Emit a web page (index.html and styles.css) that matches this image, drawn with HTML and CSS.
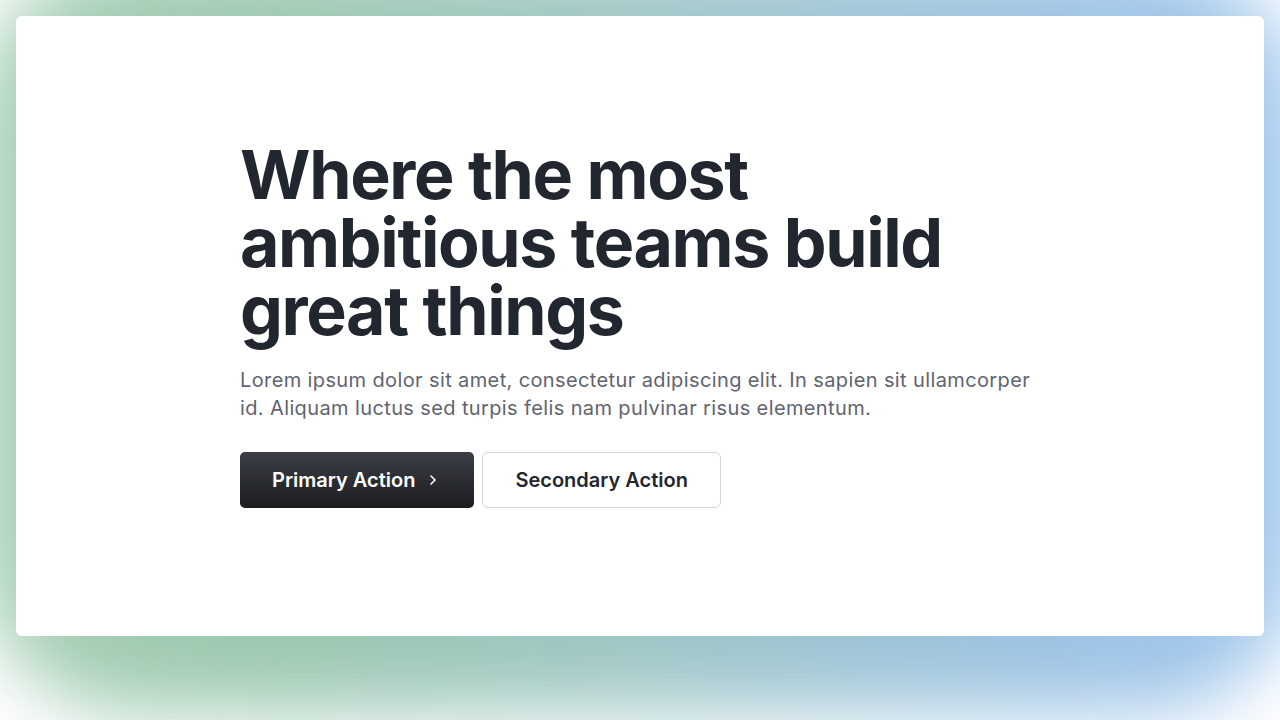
FILE: index.html
```html
<!DOCTYPE html>
<html lang="en">
<head>
<meta charset="utf-8">
<title>Hero</title>
<link rel="stylesheet" href="styles.css">
</head>
<body>
<div class="backdrop" aria-hidden="true"></div>
<main class="card">
  <section class="hero">
    <h1 class="hero-title">Where the most ambitious teams build great things</h1>
    <p class="hero-text">Lorem ipsum dolor sit amet, consectetur adipiscing elit. In sapien sit ullamcorper id. Aliquam luctus sed turpis felis nam pulvinar risus elementum.</p>
    <div class="actions">
      <a class="btn btn-primary" href="#">Primary Action
        <svg class="chev" width="16" height="16" viewBox="0 0 16 16" fill="none"><path d="M6 4l4 4-4 4" stroke="currentColor" stroke-width="1.6" stroke-linecap="round" stroke-linejoin="round"/></svg>
      </a>
      <a class="btn btn-secondary" href="#">Secondary Action</a>
    </div>
  </section>
</main>
</body>
</html>
```

FILE: styles.css
```css
* { box-sizing: border-box; }
html, body { margin: 0; height: 100%; }
body {
  background: #ffffff;
  font-family: Inter, "Noto Sans", sans-serif;
  color: #22262e;
  padding: 16px;
  overflow: hidden;
  position: relative;
}
.backdrop {
  position: fixed;
  left: -24px;
  right: -24px;
  top: -40px;
  bottom: 8px;
  border-radius: 160px;
  background: linear-gradient(90deg, #a6cfb4 0%, #9cc8ae 22%, #9fc6c6 50%, #9cc3e3 80%, #a0c6ee 100%);
  filter: blur(36px);
  z-index: 0;
}
.card {
  position: relative;
  z-index: 1;
  background: #ffffff;
  border-radius: 6px;
  height: 620px;
  display: flex;
  align-items: flex-start;
  justify-content: center;
  padding-top: 124px;
}
.hero {
  width: 800px;
}
.hero-title {
  margin: 0;
  font-size: 68px;
  line-height: 68px;
  font-weight: 700;
  letter-spacing: -0.02em;
  color: #22262e;
  max-width: 760px;
}
.hero-text {
  margin: 22px 0 0;
  font-size: 20px;
  line-height: 28px;
  letter-spacing: 0.38px;
  color: #5f6470;
}
.actions {
  display: flex;
  gap: 8px;
  margin-top: 30px;
}
.btn {
  display: inline-flex;
  align-items: center;
  justify-content: center;
  height: 56px;
  padding: 0 32px;
  font-size: 20px;
  font-weight: 600;
  text-decoration: none;
  border-radius: 5px;
}
.btn-primary {
  background: linear-gradient(180deg, #3b3e45 0%, #1b1d21 100%);
  color: #ffffff;
  gap: 10px;
  padding-right: 33px;
}
.btn-secondary {
  background: #ffffff;
  color: #22262e;
  border: 1px solid #d3d6dc;
  border-radius: 6px;
}
.chev { display: block; }
```
